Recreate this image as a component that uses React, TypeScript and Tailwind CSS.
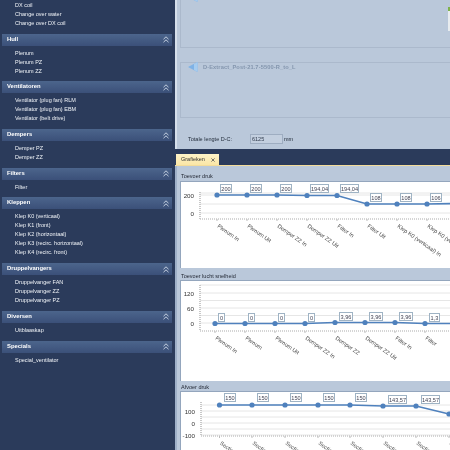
import React from "react";

const groups: { title?: string; items: string[] }[] = [
  { items: ["DX coil", "Change over water", "Change over DX coil"] },
  { title: "Hull", items: ["Plenum", "Plenum PZ", "Plenum ZZ"] },
  { title: "Ventilatoren", items: ["Ventilator (plug fan) RLM", "Ventilator (plug fan) EBM", "Ventilator (belt drive)"] },
  { title: "Dempers", items: ["Demper PZ", "Demper ZZ"] },
  { title: "Filters", items: ["Filter"] },
  { title: "Kleppen", items: ["Klep K0 (verticaal)", "Klep K1 (front)", "Klep K2 (horizontaal)", "Klep K3 (recirc. horizontaal)", "Klep K4 (recirc. front)"] },
  { title: "Druppelvangers", items: ["Druppelvanger FAN", "Druppelvanger ZZ", "Druppelvanger PZ"] },
  { title: "Diversen", items: ["Uitblaaskap"] },
  { title: "Specials", items: ["Special_ventilator"] },
];

function Chevrons() {
  return (
    <svg width="6" height="7" viewBox="0 0 6 7" fill="none" stroke="#d3dcea" strokeWidth="0.9">
      <path d="M0.5 3.2 L3 0.8 L5.5 3.2" />
      <path d="M0.5 6.2 L3 3.8 L5.5 6.2" />
    </svg>
  );
}

function Arrow() {
  return (
    <svg width="10" height="10" viewBox="0 0 10 10" className="shrink-0">
      <path d="M0 5 L9.5 0 L9.5 10 Z" fill="#7fb2e6" />
      <path d="M6 2 L9.5 0 L9.5 10 L6 8 Z" fill="#a6ccef" />
    </svg>
  );
}

type ChartProps = {
  height: number;
  axisX: number;
  top: number;
  bottom: number;
  grids: { y: number; label?: string }[];
  points: { x: number; y: number; v: string; lx: number; ly: number; lw: number }[];
  cats: string[];
  catY: number;
};

function Chart({ height, axisX, top, bottom, grids, points, cats, catY }: ChartProps) {
  return (
    <svg width="269" height={height} className="block" style={{ fontFamily: "'Liberation Sans', sans-serif", whiteSpace: "pre" }}>
      {grids.map((g, i) => (
        <line key={i} x1={axisX} x2="269" y1={g.y} y2={g.y} stroke="#e6e6e6" />
      ))}
      {grids.filter((g) => g.label).map((g, i) => (
        <text key={i} x={axisX - 6} y={g.y + 2.5} textAnchor="end" fontSize="6.2" fill="#333">
          {g.label}
        </text>
      ))}
      <line x1={axisX} x2={axisX} y1={top} y2={bottom} stroke="#c8c8c8" strokeDasharray="1 1" strokeWidth="2" />
      <line x1={axisX} x2="269" y1={bottom} y2={bottom} stroke="#c8c8c8" strokeDasharray="1 1" strokeWidth="1.5" />
      {points.map((p, i) => (
        <line key={i} x1={p.x} x2={p.x} y1={bottom} y2={bottom + 2} stroke="#bbb" />
      ))}
      <polyline points={points.map((p) => `${p.x},${p.y}`).join(" ")} fill="none" stroke="#4f81bd" strokeWidth="1.6" />
      {points.map((p, i) => (
        <circle key={i} cx={p.x} cy={p.y} r="2.6" fill="#4f81bd" />
      ))}
      {points.map((p, i) => (
        <g key={i}>
          <rect x={p.lx + 0.5} y={p.ly + 0.5} width={p.lw} height="8" fill="#fff" stroke="#9fb3c4" />
          <text x={p.lx + 0.5 + p.lw / 2} y={p.ly + 6.6} textAnchor="middle" fontSize="5.6" fill="#445">
            {p.v}
          </text>
        </g>
      ))}
      {cats.map((c, i) => (
        <text
          key={i}
          x={points[i].x}
          y={catY}
          fontSize="5.6"
          fill="#444"
          transform={`rotate(35 ${points[i].x} ${catY})`}
        >
          {c}
        </text>
      ))}
    </svg>
  );
}

const chart1: ChartProps = {
  height: 86,
  axisX: 19,
  top: 10,
  bottom: 37,
  grids: [
    { y: 11 },
    { y: 13, label: "200" },
    { y: 22 },
    { y: 31, label: "0" },
  ],
  points: [
    { x: 36, y: 13, v: "200", lx: 39, ly: 2, lw: 11 },
    { x: 66, y: 13, v: "200", lx: 69, ly: 2, lw: 11 },
    { x: 96, y: 13, v: "200", lx: 99, ly: 2, lw: 11 },
    { x: 126, y: 13.5, v: "194,04", lx: 129, ly: 2, lw: 18 },
    { x: 156, y: 13.5, v: "194,04", lx: 159, ly: 2, lw: 18 },
    { x: 186, y: 22, v: "108", lx: 189, ly: 11, lw: 11 },
    { x: 216, y: 22, v: "108", lx: 219, ly: 11, lw: 11 },
    { x: 246, y: 22, v: "106", lx: 249, ly: 11, lw: 11 },
    { x: 276, y: 21.5, v: "106", lx: 279, ly: 11, lw: 11 },
  ],
  cats: ["Plenum  In", "Plenum  Uit", "Demper ZZ  In", "Demper ZZ  Uit", "Filter  In", "Filter  Uit", "Klep K0 (verticaal)  In", "Klep K0 (verticaal)  Uit"],
  catY: 45,
};

const chart2: ChartProps = {
  height: 100,
  axisX: 19,
  top: 4,
  bottom: 50,
  grids: [
    { y: 4 },
    { y: 12, label: "120" },
    { y: 19.5 },
    { y: 27, label: "60" },
    { y: 34.5 },
    { y: 42, label: "0" },
  ],
  points: [
    { x: 34, y: 42.5, v: "0", lx: 37, ly: 32, lw: 6 },
    { x: 64, y: 42.5, v: "0", lx: 67, ly: 32, lw: 6 },
    { x: 94, y: 42.5, v: "0", lx: 97, ly: 32, lw: 6 },
    { x: 124, y: 42.5, v: "0", lx: 127, ly: 32, lw: 6 },
    { x: 154, y: 41.5, v: "3,96", lx: 158, ly: 31, lw: 13 },
    { x: 184, y: 41.5, v: "3,96", lx: 188, ly: 31, lw: 13 },
    { x: 214, y: 41.5, v: "3,96", lx: 218, ly: 31, lw: 13 },
    { x: 244, y: 42.5, v: "1,3", lx: 248, ly: 32, lw: 10 },
    { x: 274, y: 42.5, v: "1,3", lx: 278, ly: 32, lw: 10 },
  ],
  cats: ["Plenum  In", "Plenum", "Plenum  Uit", "Demper ZZ  In", "Demper ZZ", "Demper ZZ  Uit", "Filter  In", "Filter", "Filter  Uit"],
  catY: 58,
};

const chart3: ChartProps = {
  height: 58,
  axisX: 20,
  top: 10,
  bottom: 44,
  grids: [
    { y: 13 },
    { y: 19, label: "100" },
    { y: 25 },
    { y: 31, label: "0" },
    { y: 37 },
    { y: 43, label: "-100" },
  ],
  points: [
    { x: 38.5, y: 13, v: "150", lx: 43, ly: 1, lw: 11 },
    { x: 71, y: 13, v: "150", lx: 76, ly: 1, lw: 11 },
    { x: 104, y: 13, v: "150", lx: 109, ly: 1, lw: 11 },
    { x: 137, y: 13, v: "150", lx: 142, ly: 1, lw: 11 },
    { x: 169, y: 13, v: "150", lx: 174, ly: 1, lw: 11 },
    { x: 202, y: 14, v: "143,57", lx: 207, ly: 3, lw: 18 },
    { x: 235, y: 14, v: "143,57", lx: 240, ly: 3, lw: 18 },
    { x: 268, y: 22, v: "73", lx: 273, ly: 12, lw: 11 },
  ],
  cats: ["Sectie 1", "Sectie 1", "Sectie 2", "Sectie 2", "Sectie 3", "Sectie 3", "Sectie 4", "Sectie 4"],
  catY: 52,
};

export default function App() {
  return (
    <div className="flex h-[450px] w-[450px] overflow-hidden bg-[#2b3b5b] font-['Liberation_Sans',sans-serif] blur-[0.25px]">
      <aside className="h-full w-[175px] shrink-0 overflow-hidden bg-[#2b3b5b] pl-[2px] pr-[3px]">
        <div className="-mt-[2px]">
          {groups.map((g, i) => (
            <section key={i}>
              {g.title && (
                <div className="flex h-[12px] items-center justify-between bg-gradient-to-b from-[#4c658c] to-[#3b5079] pl-[5px] pr-[3px]">
                  <span className="text-[5.9px] font-bold leading-none text-white">{g.title}</span>
                  <Chevrons />
                </div>
              )}
              <ul className="pb-[5.7px] pl-[13px] pt-[3px]">
                {g.items.map((it) => (
                  <li key={it} className="h-[9px] text-[5.5px] leading-[9px] text-[#f1f4f8]">
                    {it}
                  </li>
                ))}
              </ul>
            </section>
          ))}
        </div>
      </aside>

      <main className="flex h-full min-w-0 flex-1 flex-col">
        <div className="relative h-[149px] shrink-0 overflow-hidden border-l-2 border-[#d6dfeb] bg-[#bac8da] pl-[3px]">
          <div className="-mt-[2px] h-[50px] border border-r-0 border-[#abb9cc] pl-[7px]">
            <div className="-mt-[7px]">
              <Arrow />
            </div>
          </div>
          <div className="mt-[14px] h-[56px] border border-r-0 border-[#abb9cc]">
            <div className="-mt-[1px] flex h-[10px] items-center gap-[5px] pl-[7px]">
              <Arrow />
              <span className="text-[5.7px] font-bold tracking-[0.1px] text-[#8496ae]">D-Extract_Post-21.7-5500-R_to_L</span>
            </div>
          </div>
          <div className="mt-[16px] flex items-center pl-[8px]">
            <span className="w-[62px] text-[5.5px] text-[#1f2937]">Totale lengte D-C:</span>
            <div className="h-[10px] w-[33px] border border-[#9eadc1] bg-[#c3cfdf] pl-[1px] text-[5.5px] leading-[9px] text-[#2f3a4c]">6125</div>
            <span className="ml-[1px] text-[5.5px] text-[#1f2937]">mm</span>
          </div>
          <div className="absolute right-0 top-[7px] h-[24px] w-[2px] bg-[#e8ecef]">
            <div className="h-[4px] w-[2px] bg-[#7fb24a]" />
          </div>
        </div>

        <div className="flex h-[16px] shrink-0 items-end bg-[#2b3b5b] pl-[1px]">
          <div className="flex h-[11px] w-[43px] items-center justify-between bg-gradient-to-b from-[#fdf3c8] to-[#fbe6a6] pl-[5px] pr-[4px]">
            <span className="text-[5.5px] leading-none text-[#333]">Grafieken</span>
            <svg width="4" height="4" viewBox="0 0 5 5" stroke="#555" strokeWidth="1"><path d="M0.5 0.5 L4.5 4.5 M4.5 0.5 L0.5 4.5" /></svg>
          </div>
        </div>
        <div className="h-[1px] shrink-0 bg-[#f3dc9a]" />

        <div className="min-h-0 flex-1 overflow-hidden border-l-2 border-[#9fb0c8] bg-[#bac8da] pl-[3px]">
          <div className="h-[15px] pl-[1px] pt-[6px] text-[5.5px] leading-[9px] text-[#1f2430]">Toevoer druk</div>
          <div className="h-[87px] overflow-hidden border-l border-t border-[#94a6bd] bg-white">
            <Chart {...chart1} />
          </div>
          <div className="h-[12px] pl-[1px] pt-[3.5px] text-[5.5px] leading-[9px] text-[#1f2430]">Toevoer lucht snelheid</div>
          <div className="h-[101px] overflow-hidden border-l border-t border-[#94a6bd] bg-white">
            <Chart {...chart2} />
          </div>
          <div className="h-[10px] pl-[1px] pt-[1.5px] text-[5.5px] leading-[9px] text-[#1f2430]">Afvoer druk</div>
          <div className="h-[59px] overflow-hidden border-l border-t border-[#94a6bd] bg-white">
            <Chart {...chart3} />
          </div>
        </div>
      </main>
    </div>
  );
}
